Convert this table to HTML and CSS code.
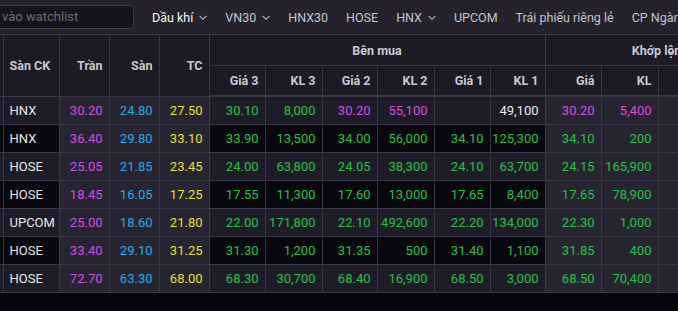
FILE: index.html
```html
<!DOCTYPE html>
<html lang="vi">
<head>
<meta charset="utf-8">
<link rel="stylesheet" href="styles.css">
</head>
<body>
<div class="topbar">
  <div class="search">vào watchlist</div>
  <nav class="tabs">
    <span class="tab active">Dầu khí <svg class="chev" viewBox="0 0 8 5"><polyline points="0.5,0.8 4,4.2 7.5,0.8"/></svg></span>
    <span class="tab">VN30 <svg class="chev" viewBox="0 0 8 5"><polyline points="0.5,0.8 4,4.2 7.5,0.8"/></svg></span>
    <span class="tab">HNX30</span>
    <span class="tab">HOSE</span>
    <span class="tab">HNX <svg class="chev" viewBox="0 0 8 5"><polyline points="0.5,0.8 4,4.2 7.5,0.8"/></svg></span>
    <span class="tab">UPCOM</span>
    <span class="tab">Trái phiếu riêng lẻ</span>
    <span class="tab">CP Ngành</span>
  </nav>
</div>
<table class="board">
  <colgroup>
    <col class="w-edge"><col class="w56"><col class="w50"><col class="w50"><col class="w50">
    <col class="w56"><col class="w57"><col class="w55"><col class="w57"><col class="w56"><col class="w55">
    <col class="w56"><col class="w57"><col class="w58"><col class="w59"><col class="w56"><col class="w56">
  </colgroup>
  <thead>
    <tr class="h1">
      <th rowspan="2" class="edge"></th>
      <th rowspan="2" class="left">Sàn CK</th>
      <th rowspan="2">Trần</th>
      <th rowspan="2">Sàn</th>
      <th rowspan="2">TC</th>
      <th colspan="6" class="center">Bên mua</th>
      <th colspan="4" class="center">Khớp lệnh</th>
      <th colspan="2" class="center">Bên bán</th>
    </tr>
    <tr class="h2">
      <th>Giá 3</th><th>KL 3</th><th>Giá 2</th><th>KL 2</th><th>Giá 1</th><th>KL 1</th>
      <th>Giá</th><th>KL</th><th>+/-</th><th>%</th><th>Giá 1</th><th>KL 1</th>
    </tr>
  </thead>
  <tbody>
    <tr class="odd">
      <td class="edge"></td><td class="left ex">HNX</td>
      <td class="ref c">30.20</td><td class="ref f">24.80</td><td class="ref r">27.50</td>
      <td class="g">30.10</td><td class="g">8,000</td><td class="c">30.20</td><td class="c">55,100</td><td></td><td class="w">49,100</td>
      <td class="mt c">30.20</td><td class="mt c">5,400</td><td class="mt c">2.70</td><td class="mt c">9.82</td><td></td><td></td>
    </tr>
    <tr class="even">
      <td class="edge"></td><td class="left ex">HNX</td>
      <td class="ref c">36.40</td><td class="ref f">29.80</td><td class="ref r">33.10</td>
      <td class="g">33.90</td><td class="g">13,500</td><td class="g">34.00</td><td class="g">56,000</td><td class="g">34.10</td><td class="g">125,300</td>
      <td class="mt g">34.10</td><td class="mt g">200</td><td class="mt g">1.00</td><td class="mt g">3.02</td><td></td><td></td>
    </tr>
    <tr class="odd">
      <td class="edge"></td><td class="left ex">HOSE</td>
      <td class="ref c">25.05</td><td class="ref f">21.85</td><td class="ref r">23.45</td>
      <td class="g">24.00</td><td class="g">63,800</td><td class="g">24.05</td><td class="g">38,300</td><td class="g">24.10</td><td class="g">63,700</td>
      <td class="mt g">24.15</td><td class="mt g">165,900</td><td class="mt g">0.70</td><td class="mt g">2.99</td><td></td><td></td>
    </tr>
    <tr class="even">
      <td class="edge"></td><td class="left ex">HOSE</td>
      <td class="ref c">18.45</td><td class="ref f">16.05</td><td class="ref r">17.25</td>
      <td class="g">17.55</td><td class="g">11,300</td><td class="g">17.60</td><td class="g">13,000</td><td class="g">17.65</td><td class="g">8,400</td>
      <td class="mt g">17.65</td><td class="mt g">78,900</td><td class="mt g">0.40</td><td class="mt g">2.32</td><td></td><td></td>
    </tr>
    <tr class="odd">
      <td class="edge"></td><td class="left ex">UPCOM</td>
      <td class="ref c">25.00</td><td class="ref f">18.60</td><td class="ref r">21.80</td>
      <td class="g">22.00</td><td class="g">171,800</td><td class="g">22.10</td><td class="g">492,600</td><td class="g">22.20</td><td class="g">134,000</td>
      <td class="mt g">22.30</td><td class="mt g">1,000</td><td class="mt g">0.50</td><td class="mt g">2.29</td><td></td><td></td>
    </tr>
    <tr class="even">
      <td class="edge"></td><td class="left ex">HOSE</td>
      <td class="ref c">33.40</td><td class="ref f">29.10</td><td class="ref r">31.25</td>
      <td class="g">31.30</td><td class="g">1,200</td><td class="g">31.35</td><td class="g">500</td><td class="g">31.40</td><td class="g">1,100</td>
      <td class="mt g">31.85</td><td class="mt g">400</td><td class="mt g">0.60</td><td class="mt g">1.92</td><td></td><td></td>
    </tr>
    <tr class="odd">
      <td class="edge"></td><td class="left ex">HOSE</td>
      <td class="ref c">72.70</td><td class="ref f">63.30</td><td class="ref r">68.00</td>
      <td class="g">68.30</td><td class="g">30,700</td><td class="g">68.40</td><td class="g">16,900</td><td class="g">68.50</td><td class="g">3,000</td>
      <td class="mt g">68.50</td><td class="mt g">70,400</td><td class="mt g">0.50</td><td class="mt g">0.74</td><td></td><td></td>
    </tr>
  </tbody>
</table>
</body>
</html>
```
FILE: styles.css
```css
html, body {
  margin: 0;
  padding: 0;
}
body {
  background: #07050f;
  font-family: Roboto, "Liberation Sans", sans-serif;
  overflow: hidden;
  width: 678px;
  height: 311px;
}
.topbar {
  height: 34px;
  background: #25222e;
  display: flex;
  align-items: center;
  overflow: hidden;
}
.search {
  flex-shrink: 0;
  box-sizing: border-box;
  height: 24px;
  width: 146px;
  margin-left: -12px;
  padding-left: 13px;
  border: 1px solid #3c3a46;
  border-radius: 4px;
  background: #15131d;
  color: #6c6a76;
  font-size: 13px;
  line-height: 22px;
  white-space: nowrap;
  overflow: hidden;
}
.tabs {
  flex-shrink: 0;
  display: flex;
  align-items: center;
  gap: 18px;
  margin-left: 18px;
  white-space: nowrap;
}
.tab {
  color: #c3c2cb;
  font-size: 12.5px;
  display: inline-flex;
  align-items: center;
}
.tab.active {
  color: #f2f2f5;
}
.chev {
  width: 8px;
  height: 5px;
  margin-left: 6px;
  margin-top: 1px;
  fill: none;
  stroke: #b4b3bc;
  stroke-width: 1.1;
}
.board {
  table-layout: fixed;
  border-collapse: collapse;
  width: 883px;
  border-top: 1px solid #363442;
  font-size: 13px;
}
.w-edge { width: 3px; }
.w50 { width: 50px; }
.w55 { width: 55px; }
.w56 { width: 56px; }
.w57 { width: 57px; }
.w58 { width: 58px; }
.w59 { width: 59px; }
th, td {
  border: 1px solid #393746;
  padding: 0 6px 0 0;
  text-align: right;
  white-space: nowrap;
  overflow: hidden;
}
th {
  background: #1c1a25;
  color: #c9c8d0;
  font-size: 12.5px;
  font-weight: 700;
  height: 29px;
}
thead tr.h1 th { height: 30px; }
thead tr.h2 th {
  border-bottom: 2px solid #383644;
}
th.center { text-align: center; padding: 0; }
.left { text-align: left; padding: 0 0 0 6px; }
.edge { padding: 0; border-left: none; }
td { height: 27px; }
tr.odd td { background: #1e1c28; }
tr.even td { background: #09070f; }
tr td.ref, tr td.mt { background: #272532; }
tr.odd td.edge { background: #1e1c28; }
.ex { color: #e4e4ea; }
.c { color: #d44ce0; }
.f { color: #2aa8e2; }
.r { color: #e6df3a; }
.g { color: #27c045; }
.w { color: #e9e9ee; }
```
